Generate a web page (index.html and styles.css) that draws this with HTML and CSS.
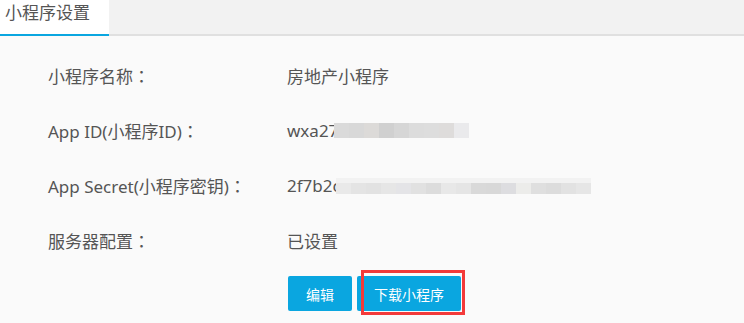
FILE: index.html
```html
<!DOCTYPE html>
<html lang="zh-CN">
<head>
<meta charset="utf-8">
<title>小程序设置</title>
<link rel="stylesheet" href="styles.css">
</head>
<body>
<div class="tabbar">
  <div class="tab">小程序设置</div>
</div>
<div class="content">
  <div class="row">
    <div class="label">小程序名称<span class="colon" lang="zh-TW">：</span></div>
    <div class="value">房地产小程序</div>
  </div>
  <div class="row">
    <div class="label">App ID(小程序ID)<span class="colon" lang="zh-TW">：</span></div>
    <div class="value"><span>wxa27</span><span class="mosaic m-id">
      <i class="b1"></i><i class="b2"></i><i class="b3"></i><i class="b4"></i><i class="b5"></i><i class="b6"></i><i class="b7"></i><i class="b8"></i><i class="b9"></i>
    </span></div>
  </div>
  <div class="row">
    <div class="label">App Secret(小程序密钥)<span class="colon" lang="zh-TW">：</span></div>
    <div class="value"><span>2f7b2c</span><span class="mosaic2">
      <span class="tier top"><i></i><i></i><i></i><i></i><i></i><i></i><i></i><i></i><i></i><i></i><i></i><i></i><i></i><i></i><i></i><i></i><i></i></span>
      <span class="tier bottom"><i class="c1"></i><i class="c2"></i><i class="c3"></i><i class="c4"></i><i class="c5"></i><i class="c6"></i><i class="c7"></i><i class="c8"></i><i class="c9"></i><i class="c10"></i><i class="c11"></i><i class="c12"></i><i class="c13"></i><i class="c14"></i><i class="c15"></i><i class="c16"></i><i class="c17"></i></span>
    </span></div>
  </div>
  <div class="row">
    <div class="label">服务器配置<span class="colon" lang="zh-TW">：</span></div>
    <div class="value">已设置</div>
  </div>
  <div class="actions">
    <button class="btn btn-edit">编辑</button>
    <div class="highlight-wrap">
      <button class="btn btn-download">下载小程序</button>
      <div class="annot"></div>
    </div>
  </div>
</div>
</body>
</html>
```
FILE: styles.css
```css
html, body {
  margin: 0;
  padding: 0;
}
body {
  background: #fafafa;
  font-family: "Noto Sans", "Noto Sans CJK SC", sans-serif;
  color: #555;
  width: 744px;
  height: 323px;
  overflow: hidden;
}
.tabbar {
  display: flex;
  background: #f2f2f2;
  border-bottom: 2px solid #e0e0e0;
  height: 34px;
}
.tab {
  box-sizing: border-box;
  width: 109px;
  height: 36px;
  padding: 0 0 0 5px;
  background: #fff;
  border-bottom: 2px solid #0aa6e0;
  font-size: 17px;
  line-height: 25px;
  color: #555;
}
.content {
  padding: 12px 0 0 48px;
}
.row {
  display: grid;
  grid-template-columns: 239px 1fr;
  height: 55px;
  align-items: center;
  font-size: 17px;
}
.colon {
  font-family: "Noto Sans CJK TC", sans-serif;
}
.value {
  display: flex;
  align-items: center;
}
.mosaic {
  display: flex;
  margin-left: -4px;
  height: 15px;
}
.mosaic i {
  display: block;
  width: 15px;
  height: 15px;
}
.b1 { background: #dadada; }
.b2 { background: #d8d8d8; }
.b3 { background: #dcdad8; }
.b4 { background: #d0d0d0; }
.b5 { background: #d6d6d6; }
.b6 { background: #dcdcdc; }
.b7 { background: #dddddd; }
.b8 { background: #dedcdb; }
.b9 { background: #eaeaec; }
.mosaic2 {
  display: flex;
  flex-direction: column;
  margin-left: -5px;
}
.tier {
  display: flex;
}
.tier i {
  display: block;
  width: 15px;
}
.top i {
  height: 5px;
  background: #f2f2f2;
}
.bottom i {
  height: 11px;
}
.c1 { background: #e9e9e9; }
.c2 { background: #e4e4e4; }
.c3 { background: #e2e2e2; }
.c4 { background: #e6e6e6; }
.c5 { background: #e4e4e7; }
.c6 { background: #e1e1e1; }
.c7 { background: #dcdcdc; }
.c8 { background: #e8e8e8; }
.c9 { background: #e5e5e5; }
.c10 { background: #d9d9d9; }
.c11 { background: #d8d8d8; }
.c12 { background: #dddde0; }
.c13 { background: #ececea; }
.c14 { background: #dfdfdf; }
.c15 { background: #dcdcdc; }
.c16 { background: #e2e2e2; }
.c17 { background: #e6e6e6; }
.actions {
  display: flex;
  gap: 5px;
  margin: 8px 0 0 240px;
}
.btn {
  box-sizing: border-box;
  height: 35px;
  border: none;
  border-radius: 2px;
  background: #0aa6e0;
  color: #fff;
  font-family: "Noto Sans", "Noto Sans CJK SC", sans-serif;
  font-size: 14px;
  padding: 0;
  margin: 0;
}
.btn-edit {
  width: 64px;
}
.btn-download {
  width: 104px;
}
.highlight-wrap {
  position: relative;
  display: flex;
}
.annot {
  position: absolute;
  top: -6px;
  left: 4px;
  right: -4px;
  bottom: -4px;
  border: 3px solid #f33a3a;
  pointer-events: none;
}
```
